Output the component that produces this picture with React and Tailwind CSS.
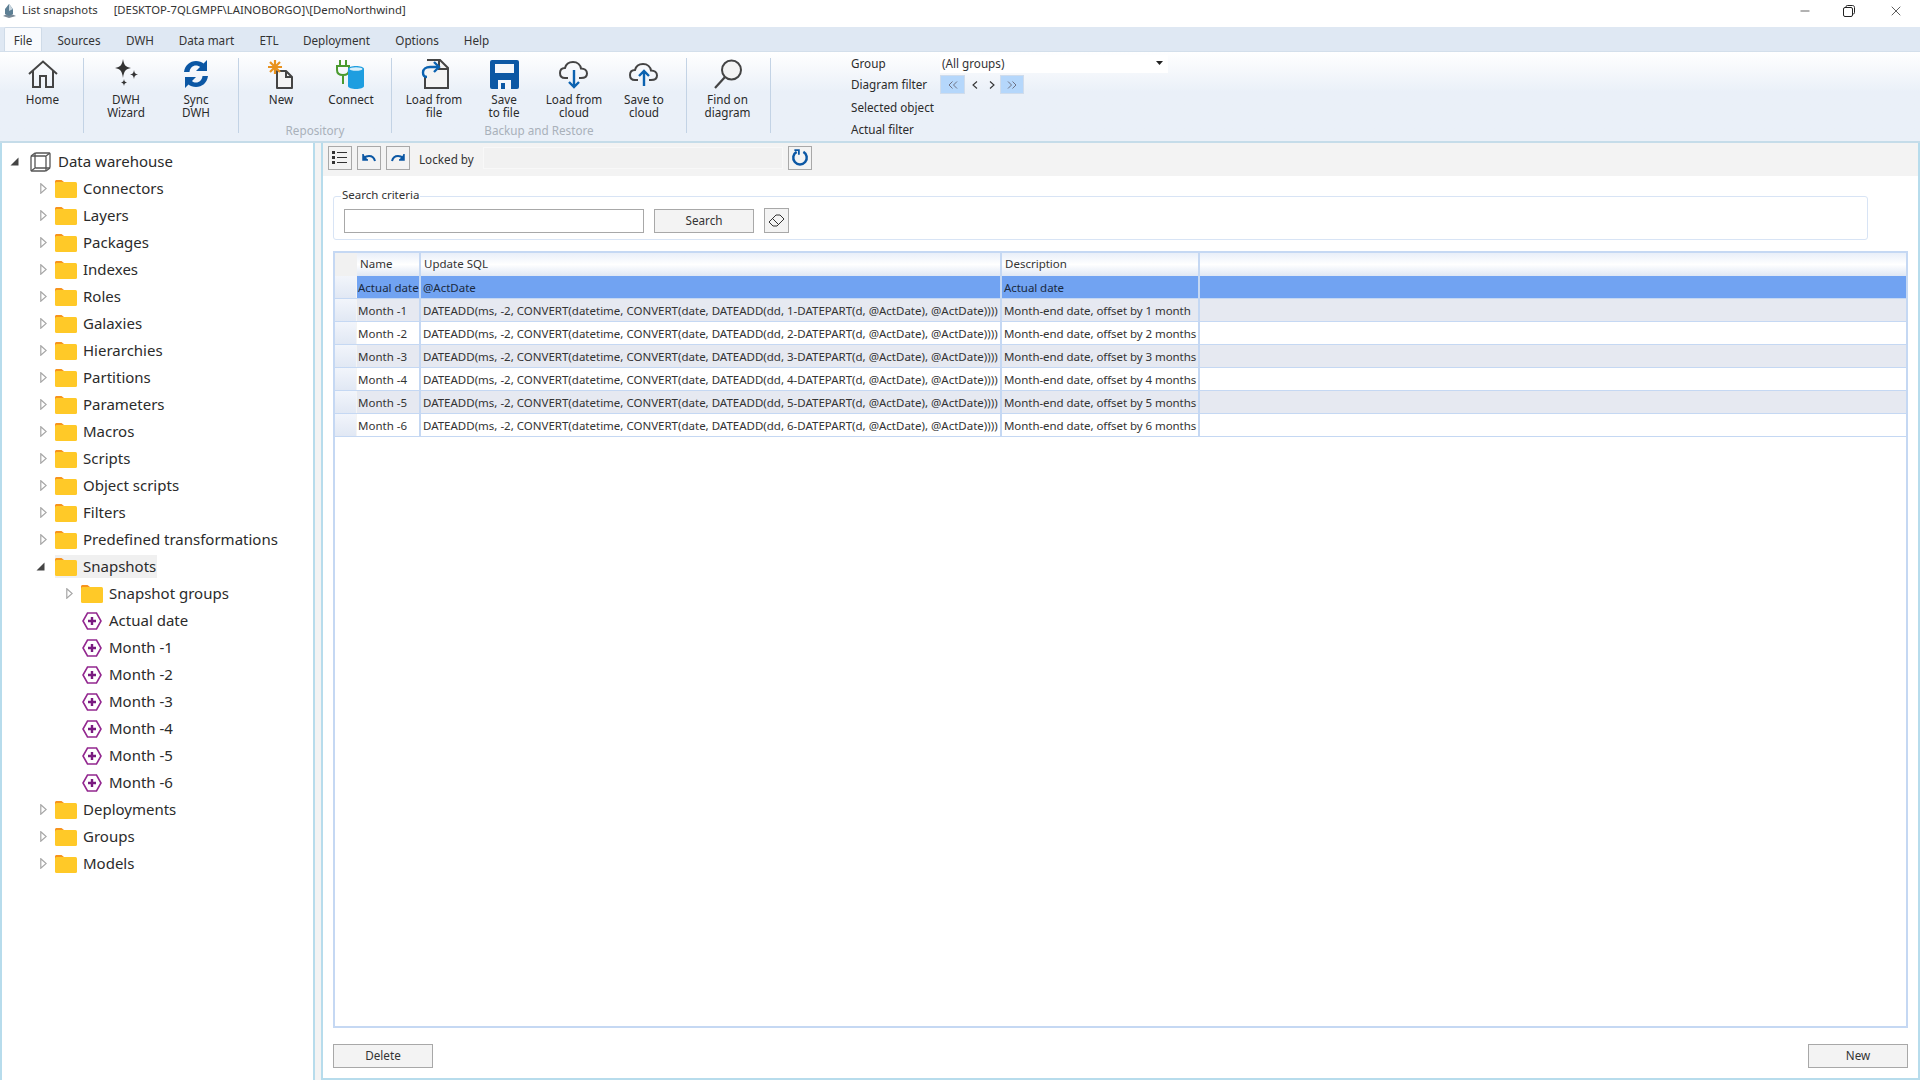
import { Minus, X } from "lucide-react";

const font = { fontFamily: '"Noto Sans", sans-serif' };

const tabs = [
    ["File", "w-[38px] ml-[4px]"],
    ["Sources", "w-[42px] ml-[16px]"],
    ["DWH", "w-[28px] ml-[26px]"],
    ["Data mart", "w-[53px] ml-[26px]"],
    ["ETL", "w-[18px] ml-[27px]"],
    ["Deployment", "w-[65px] ml-[26px]"],
    ["Options", "w-[42px] ml-[27px]"],
    ["Help", "w-[25px] ml-[26px]"],
];

const topFolders = [
    "Connectors", "Layers", "Packages", "Indexes", "Roles", "Galaxies", "Hierarchies",
    "Partitions", "Parameters", "Macros", "Scripts", "Object scripts", "Filters",
    "Predefined transformations",
];

const snapshots = ["Actual date", "Month -1", "Month -2", "Month -3", "Month -4", "Month -5", "Month -6"];

const rows = [1, 2, 3, 4, 5, 6].map((n) => ({
    name: `Month -${n}`,
    sql: `DATEADD(ms, -2, CONVERT(datetime, CONVERT(date, DATEADD(dd, ${n}-DATEPART(d, @ActDate), @ActDate))))`,
    desc: `Month-end date, offset by ${n} month${n > 1 ? "s" : ""}`,
}));

function Folder() {
    return (
        <svg width="22" height="18" viewBox="0 0 22 18" className="shrink-0">
            <path d="M0 3V1.500C0 .7.7 0 1.500 0h5L9 2v2H0z" fill="#f7941d" />
            <rect x="0" y="2" width="22" height="16" rx="1.500" fill="#ffc928" />
        </svg>
    );
}

function HexPlus() {
    return (
        <svg width="21" height="18" viewBox="0 0 21 18" className="shrink-0">
            <path d="M5.500 1h9L19 9l-4.500 8h-9L1 9z" fill="none" stroke="#93278f" strokeWidth="1.600" />
            <path d="M10 5v8M6 9h8" stroke="#7a1a80" strokeWidth="2.400" />
        </svg>
    );
}

function Arrow({ open }) {
    if (open) {
        return (
            <svg width="9" height="9" viewBox="0 0 9 9" className="shrink-0">
                <path d="M8.500.5v8H.5z" fill="#444" />
            </svg>
        );
    }
    return (
        <svg width="7" height="11" viewBox="0 0 7 11" className="shrink-0">
            <path d="M.8.8l5.400 4.700L.8 10.200z" fill="#fff" stroke="#a6a6a6" strokeWidth="1.200" />
        </svg>
    );
}

function TreeRow({ pad, gap = 6, arrow, icon, label, selected }) {
    return (
        <div className="h-[27px] flex items-center" style={{ paddingLeft: pad }}>
            <div className="w-[12px] flex justify-center" style={{ marginRight: gap }}>{arrow}</div>
            <div className={`flex items-center h-[23px] ${selected ? "bg-[#f0f0f0]" : ""}`}>
                {icon}
                <span className="ml-[6px] text-[15px] text-[#2b2b2b] whitespace-nowrap pr-[1px]">{label}</span>
            </div>
        </div>
    );
}

function RibbonBtn({ icon, lines, width = "w-[70px]" }) {
    return (
        <div className={`${width} flex flex-col items-center shrink-0`}>
            <div className="h-[30px] mt-[7px] flex items-center justify-center">{icon}</div>
            <div className="mt-[4px] text-[11.700px] leading-[13px] text-[#2b2b2b] text-center whitespace-nowrap">
                {lines.map((l) => <div key={l}>{l}</div>)}
            </div>
        </div>
    );
}

function RibbonSep() {
    return <div className="w-[1px] h-[75px] mt-[6px] bg-[#c3d3e5] shrink-0" />;
}

function ToolBtn({ children, className = "" }) {
    return (
        <div className={`w-[24px] h-[24px] border border-[#a8a8a8] bg-[#f3f3f3] flex items-center justify-center shrink-0 ${className}`}>
            {children}
        </div>
    );
}

function GridCells({ name, sql, desc, className = "", textClass = "text-[#333]" }) {
    return (
        <div className={`flex h-[23px] border-b border-[#c5d8f3] text-[11.500px] leading-[23px] whitespace-nowrap ${textClass} ${className}`}>
            <div className="w-[22px] shrink-0 bg-gradient-to-b from-[#f2f5fb] to-[#e1e8f4] border-r border-[#f4f4f4]" />
            <div className="w-[64px] shrink-0 pl-[1px] border-r-2 border-[#c5d8f3] overflow-hidden">{name}</div>
            <div className="w-[581px] shrink-0 pl-[2px] border-r-2 border-[#c5d8f3] overflow-hidden">{sql}</div>
            <div className="w-[198px] shrink-0 pl-[2px] border-r-2 border-[#c5d8f3] overflow-hidden tracking-[-0.06px]">{desc}</div>
            <div className="flex-1" />
        </div>
    );
}

export default function App() {
    return (
        <div style={font} className="w-[1920px] h-[1080px] overflow-hidden flex flex-col bg-[#f3f3f3]">
            {/* title bar */}
            <div className="h-[27px] bg-white flex items-center shrink-0 pb-[6px] text-[11.300px] text-[#333]">
                <svg width="15" height="15" viewBox="0 0 15 15" className="ml-[2px] mr-[5px]">
                    <path d="M1 13l6-3 7 3-7 2z" fill="#7b8a97" />
                    <path d="M3 11V6l4-5 4 5v5l-4 2z" fill="#5d7f94" />
                    <path d="M7 1l4 5-4 2z" fill="#c9d6df" />
                </svg>
                <span>List snapshots</span>
                <span className="ml-[16px]">[DESKTOP-7QLGMPF\LAINOBORGO]\[DemoNorthwind]</span>
                <div className="ml-auto flex items-center text-[#222]">
                    <Minus size={14} strokeWidth={1.200} className="mr-[31px]" />
                    <svg width="12" height="12" viewBox="0 0 12 12" className="mr-[33px]">
                        <rect x=".5" y="2.500" width="9" height="9" rx="1.500" fill="#fff" stroke="#222" />
                        <path d="M3 2.500V1.800C3 1 3.500.5 4.300.5h5.200c1.200 0 2 .8 2 2v5.200c0 .8-.5 1.300-1.300 1.300" fill="none" stroke="#222" />
                    </svg>
                    <X size={16} strokeWidth={1.100} className="mr-[16px]" />
                </div>
            </div>

            {/* ribbon tabs */}
            <div className="h-[25px] bg-[#dfe8f3] flex items-end shrink-0 border-b border-[#d3dfeb] text-[11.700px] text-[#333]">
                {tabs.map(([t, w], i) => (
                    <div
                        key={t}
                        className={`${w} h-[24px] pt-[3px] flex items-center justify-center whitespace-nowrap ${i === 0 ? "bg-[#f8fafd] rounded-t-[2px] border border-b-0 border-[#cfdbe8]" : ""}`}
                    >
                        {t}
                    </div>
                ))}
            </div>

            {/* ribbon */}
            <div className="h-[89px] shrink-0 flex bg-gradient-to-b from-white via-[#eaf0f8] via-[45%] to-[#eaf0f8] text-[#2b2b2b]">
                <div className="w-[83px] shrink-0 pl-[1px]">
                    <RibbonBtn
                        width="w-[83px]"
                        lines={["Home"]}
                        icon={
                            <svg width="30" height="28" viewBox="0 0 30 28" fill="none" stroke="#444" strokeWidth="2">
                                <path d="M1 14L15 1.500 29 14" />
                                <path d="M5 11v16h7V16h6v11h7V11" />
                            </svg>
                        }
                    />
                </div>
                <RibbonSep />
                <div className="w-[154px] shrink-0 flex pl-[7px]">
                    <RibbonBtn
                        lines={["DWH", "Wizard"]}
                        icon={
                            <svg width="26" height="30" viewBox="0 0 26 30" fill="#333">
                                <path d="M10 0c1 6 2.500 8 8 9-5.500 1-7 3-8 10-1-7-2.500-9-8-10 5.500-1 7-3 8-9z" />
                                <path d="M21 11c.5 3 1.200 4 4 4.500-2.800.5-3.500 1.500-4 4.500-.5-3-1.200-4-4-4.500 2.800-.5 3.500-1.500 4-4.500z" />
                                <path d="M11 20c.4 2.200 1 3 3 3.500-2 .5-2.600 1.300-3 3.500-.4-2.200-1-3-3-3.500 2-.5 2.600-1.300 3-3.500z" />
                            </svg>
                        }
                    />
                    <RibbonBtn
                        lines={["Sync", "DWH"]}
                        icon={
                            <svg width="30" height="30" viewBox="0 0 30 30" fill="#0b57a4">
                                <path d="M3 13C4 6 9 2 15 2c3 0 6 1 7.500 2.500L26 1v11H15l4-4C18 7 16.500 6.500 15 6.500 11.500 6.500 9 9 8.500 13z" />
                                <path d="M27 17C26 24 21 28 15 28c-3 0-6-1-7.500-2.500L4 29V18h11l-4 4c1 1 2.500 1.500 4 1.500 3.500 0 6-2.500 6.500-6.500z" />
                            </svg>
                        }
                    />
                </div>
                <RibbonSep />
                <div className="w-[152px] shrink-0 relative">
                    <div className="flex pl-[7px]">
                        <RibbonBtn
                            lines={["New"]}
                            icon={
                                <svg width="28" height="30" viewBox="0 0 28 30">
                                    <path d="M10 12h9l6 6v11H10z" fill="#f4f4f4" stroke="#444" strokeWidth="2" strokeLinejoin="round" />
                                    <path d="M19 12v6h6" fill="none" stroke="#444" strokeWidth="2" />
                                    <path d="M8 1v14M1 8h14M3 3l10 10M13 3L3 13" stroke="#e8921f" strokeWidth="2.200" />
                                </svg>
                            }
                        />
                        <RibbonBtn
                            lines={["Connect"]}
                            icon={
                                <svg width="30" height="30" viewBox="0 0 30 30">
                                    <path d="M4 1v6M10 1v6M1 7h12v4c0 4-3 5-6 5s-6-1-6-5zM7 16v9" fill="none" stroke="#4a9a2f" strokeWidth="2" />
                                    <path d="M12 10c0-2 4-3 8-3s8 1 8 3v17c0 2-4 3-8 3s-8-1-8-3z" fill="#1e9ee0" />
                                    <ellipse cx="20" cy="10" rx="6.500" ry="1.800" fill="#d9effa" />
                                </svg>
                            }
                        />
                    </div>
                    <div className="absolute left-0 right-0 top-[71px] text-center text-[11.700px] leading-[14px] text-[#a9b1ba]">Repository</div>
                </div>
                <RibbonSep />
                <div className="w-[294px] shrink-0 relative">
                    <div className="flex pl-[7px]">
                        <RibbonBtn
                            lines={["Load from", "file"]}
                            icon={
                                <svg width="30" height="30" viewBox="0 0 30 30">
                                    <path d="M8 1h13l8 8v20H6V18" fill="#f4f4f4" stroke="#444" strokeWidth="2" />
                                    <path d="M20 1v9h9" fill="none" stroke="#444" strokeWidth="2" />
                                    <path d="M19 8h-8c-4 0-7 2-7 5.500S6 18 8 18" fill="none" stroke="#0b62b0" strokeWidth="2.400" />
                                    <path d="M15 3l5 5-5 5" fill="none" stroke="#0b62b0" strokeWidth="2.400" />
                                </svg>
                            }
                        />
                        <RibbonBtn
                            lines={["Save", "to file"]}
                            icon={
                                <svg width="29" height="29" viewBox="0 0 29 29">
                                    <rect width="29" height="29" rx="2" fill="#0b57a4" />
                                    <rect x="5" y="4" width="19" height="9" fill="#f3f6fb" />
                                    <rect x="8" y="20" width="13" height="9" fill="#f3f6fb" />
                                    <rect x="11" y="23" width="4" height="6" fill="#0b57a4" />
                                </svg>
                            }
                        />
                        <RibbonBtn
                            lines={["Load from", "cloud"]}
                            icon={
                                <svg width="30" height="30" viewBox="0 0 30 30" fill="none">
                                    <path d="M9 19H6c-3 0-5-2-5-5s2-5 5-5c1-4 4-6 8-6 4.500 0 7.500 3 8 6.500 3.500 0 6 2 6 5s-2.500 4.500-6 4.500h-2" stroke="#444" strokeWidth="2" />
                                    <path d="M15 11v17M10 23l5 5 5-5" stroke="#0b62b0" strokeWidth="2.400" />
                                </svg>
                            }
                        />
                        <RibbonBtn
                            lines={["Save to", "cloud"]}
                            icon={
                                <svg width="30" height="30" viewBox="0 0 30 30" fill="none">
                                    <path d="M9 21H6c-3 0-5-2-5-5s2-5 5-5c1-4 4-6 8-6 4.500 0 7.500 3 8 6.500 3.500 0 6 2 6 5s-2.500 4.500-6 4.500h-2" stroke="#444" strokeWidth="2" />
                                    <path d="M15 27V12M10 17l5-5 5 5" stroke="#0b62b0" strokeWidth="2.400" />
                                </svg>
                            }
                        />
                    </div>
                    <div className="absolute left-0 right-0 top-[71px] text-center text-[11.700px] leading-[14px] text-[#a9b1ba]">Backup and Restore</div>
                </div>
                <RibbonSep />
                <div className="w-[83px] shrink-0">
                    <RibbonBtn
                        width="w-[81px]"
                        lines={["Find on", "diagram"]}
                        icon={
                            <svg width="30" height="30" viewBox="0 0 30 30" fill="none">
                                <circle cx="18.500" cy="11" r="9.500" fill="#f3f3f3" stroke="#444" strokeWidth="2" />
                                <path d="M12 18L2 29" stroke="#444" strokeWidth="2.200" />
                            </svg>
                        }
                    />
                </div>
                <RibbonSep />
                <div className="ml-[80px] pt-[3px] text-[11.700px] text-[#2b2b2b]">
                    <div className="flex h-[18px] items-center">
                        <span className="w-[89px]">Group</span>
                        <div className="w-[228px] h-[18px] bg-white flex items-center pl-[2px] text-[#333] relative">
                            (All groups)
                            <svg width="7" height="4" viewBox="0 0 7 4" className="absolute right-[5px] top-[6px]">
                                <path d="M0 0h7L3.500 4z" fill="#222" />
                            </svg>
                        </div>
                    </div>
                    <div className="flex h-[19px] mt-[2px] items-center">
                        <span className="w-[89px]">Diagram filter</span>
                        <div className="flex items-center text-[#555]">
                            <div className="w-[25px] h-[19px] bg-[#b5d7fb] border border-[#d0dceb] flex items-center justify-center">
                                <svg width="10" height="8" viewBox="0 0 10 8" fill="none" stroke="#667" strokeWidth=".9"><path d="M4.500.5L1 4l3.500 3.500M9 .5L5.500 4 9 7.500" /></svg>
                            </div>
                            <div className="w-[19px] flex justify-center">
                                <svg width="6" height="8" viewBox="0 0 6 8" fill="none" stroke="#333" strokeWidth="1.100"><path d="M5 .5L1 4l4 3.500" /></svg>
                            </div>
                            <div className="w-[16px] flex justify-center">
                                <svg width="6" height="8" viewBox="0 0 6 8" fill="none" stroke="#333" strokeWidth="1.100"><path d="M1 .5L5 4 1 7.500" /></svg>
                            </div>
                            <div className="w-[24px] h-[19px] bg-[#b5d7fb] border border-[#d0dceb] flex items-center justify-center">
                                <svg width="10" height="8" viewBox="0 0 10 8" fill="none" stroke="#667" strokeWidth=".9"><path d="M1 .5L4.500 4 1 7.500M5.500.5L9 4 5.500 7.500" /></svg>
                            </div>
                        </div>
                    </div>
                    <div className="h-[22px] mt-[3px] flex items-center">Selected object</div>
                    <div className="h-[22px] flex items-center">Actual filter</div>
                </div>
            </div>
            <div className="h-[2px] shrink-0 bg-[#c5dce9]" />

            {/* body */}
            <div className="flex-1 flex min-h-0">
                {/* tree */}
                <div className="w-[315px] shrink-0 bg-white border-l-2 border-r-2 border-[#b7dcec] pt-[5px] overflow-hidden">
                    <TreeRow
                        pad={6}
                        gap={10}
                        arrow={<Arrow open />}
                        label="Data warehouse"
                        icon={
                            <svg width="22" height="20" viewBox="0 0 22 20" fill="none" stroke="#555" strokeWidth="1.300" className="shrink-0">
                                <rect x="1" y="4" width="15" height="15" rx="1" />
                                <rect x="5" y="1" width="15" height="15" rx="1" />
                                <path d="M1 4l4-3M16 4l4-3M1 19l4-3M16 19l4-3" />
                            </svg>
                        }
                    />
                    {topFolders.map((f) => (
                        <TreeRow key={f} pad={35} arrow={<Arrow />} icon={<Folder />} label={f} />
                    ))}
                    <TreeRow pad={32} gap={9} arrow={<Arrow open />} icon={<Folder />} label="Snapshots" selected />
                    <TreeRow pad={61} arrow={<Arrow />} icon={<Folder />} label="Snapshot groups" />
                    {snapshots.map((s) => (
                        <TreeRow key={s} pad={61} gap={7} icon={<HexPlus />} label={s} />
                    ))}
                    {["Deployments", "Groups", "Models"].map((f) => (
                        <TreeRow key={f} pad={35} arrow={<Arrow />} icon={<Folder />} label={f} />
                    ))}
                </div>

                <div className="w-[6px] shrink-0" />

                {/* main panel */}
                <div className="flex-1 min-w-0 flex flex-col border-l-2 border-r-2 border-b-2 border-[#b7dcec]">
                    <div className="h-[33px] shrink-0 bg-[#f3f3f3] flex items-start pt-[3px] pl-[5px] text-[11.700px] leading-[26px] text-[#333]">
                        <ToolBtn>
                            <svg width="16" height="14" viewBox="0 0 16 14" fill="#333">
                                <rect y="0" width="3" height="3" /><rect x="5" y="1" width="10" height="1" />
                                <rect y="5" width="3" height="3" /><rect x="5" y="6" width="10" height="1" />
                                <rect y="10" width="3" height="3" /><rect x="5" y="11" width="10" height="1" />
                            </svg>
                        </ToolBtn>
                        <ToolBtn className="ml-[5px]">
                            <svg width="14" height="10" viewBox="0 0 14 10" fill="none" stroke="#0b57a4" strokeWidth="2"><path d="M13 8C12 4 9 3 7 3 5 3 3 4 2 5" /><path d="M1 1v6h5" strokeWidth="1.500" fill="#0b57a4" /></svg>
                        </ToolBtn>
                        <ToolBtn className="ml-[5px]">
                            <svg width="14" height="10" viewBox="0 0 14 10" fill="none" stroke="#0b57a4" strokeWidth="2"><path d="M1 8c1-4 4-5 6-5 2 0 4 1 5 2" /><path d="M13 1v6H8" strokeWidth="1.500" fill="#0b57a4" /></svg>
                        </ToolBtn>
                        <span className="ml-[9px] w-[64px]">Locked by</span>
                        <div className="w-[300px] h-[22px] mt-[1px] bg-[#f1f1f1] border border-[#f8f8f8]" />
                        <ToolBtn className="ml-[5px]">
                            <svg width="18" height="18" viewBox="0 0 16 16" fill="none" stroke="#0b57a4" strokeWidth="2.200"><path d="M5 2.500a6 6 0 1 0 6 0" /><path d="M3 1h4v4" strokeWidth="1.600" /></svg>
                        </ToolBtn>
                    </div>

                    <div className="flex-1 min-h-0 bg-white flex flex-col pl-[10px] pr-[10px]">
                        {/* search criteria */}
                        <div className="mt-[20px] h-[44px] mr-[40px] shrink-0 border border-[#d8e4f5] rounded-[3px] relative flex items-center pl-[10px] pt-[5px]">
                            <span className="absolute left-[7px] -top-[10px] bg-white px-[1px] text-[11.500px] leading-[16px] text-[#333]">Search criteria</span>
                            <div className="w-[300px] h-[24px] border border-[#a8a8a8] bg-white" />
                            <div className="w-[100px] h-[24px] ml-[10px] border border-[#a8a8a8] bg-[#f3f3f3] flex items-center justify-center text-[11.700px] text-[#333]">Search</div>
                            <div className="w-[25px] h-[25px] ml-[10px] border border-[#a8a8a8] bg-[#f3f3f3] flex items-center justify-center">
                                <svg width="17" height="14" viewBox="0 0 17 14" fill="none" stroke="#333"><path d="M1 8l7-7h4l4 4-7 7H5zM4.500 4.500l6 6" /></svg>
                            </div>
                        </div>

                        {/* grid */}
                        <div className="mt-[11px] flex-1 min-h-0 border-2 border-[#c5d8f3] border-t-0 flex flex-col">
                            <div className="flex h-[25px] shrink-0 border-t-2 border-[#c5d8f3] text-[11.500px] leading-[22px] text-[#333] bg-gradient-to-b from-[#e9eff9] via-[#ffffff] to-[#dfe7f4]">
                                <div className="w-[22px] shrink-0 bg-[#f1f1f1]" />
                                <div className="w-[64px] shrink-0 pl-[3px] border-r-2 border-[#c5d8f3]">Name</div>
                                <div className="w-[581px] shrink-0 pl-[3px] border-r-2 border-[#c5d8f3]">Update SQL</div>
                                <div className="w-[198px] shrink-0 pl-[3px] border-r-2 border-[#c5d8f3]">Description</div>
                            </div>
                            <GridCells name="Actual date" sql="@ActDate" desc="Actual date" className="bg-[#71a3f2]" textClass="text-[#1a2a3f]" />
                            {rows.map((r, i) => (
                                <GridCells key={r.name} {...r} className={i % 2 === 0 ? "bg-[#e6e9f1]" : "bg-white"} />
                            ))}
                        </div>

                        <div className="h-[50px] shrink-0 flex items-start pt-[16px] justify-between text-[11.700px] text-[#333]">
                            <div className="w-[100px] h-[24px] border border-[#a8a8a8] bg-[#f3f3f3] flex items-center justify-center">Delete</div>
                            <div className="w-[100px] h-[24px] border border-[#a8a8a8] bg-[#f3f3f3] flex items-center justify-center">New</div>
                        </div>
                    </div>
                </div>
            </div>
        </div>
    );
}
